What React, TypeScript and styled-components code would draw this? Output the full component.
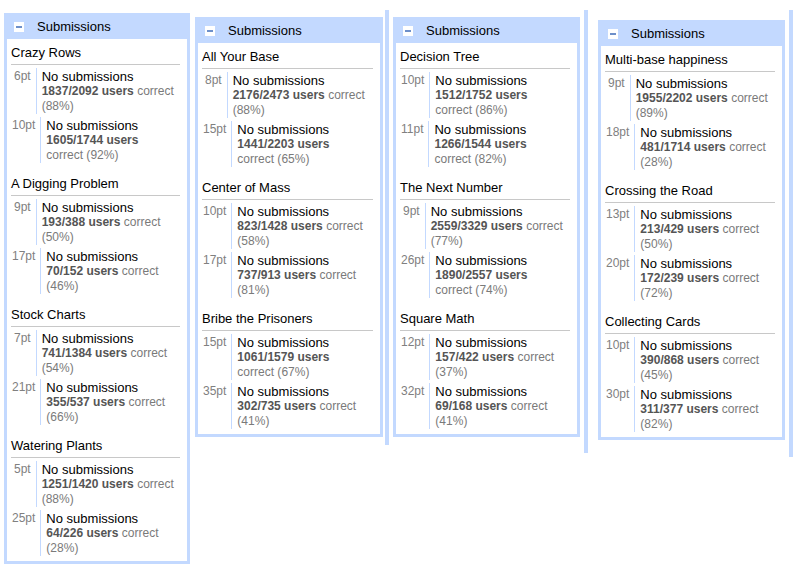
import React from "react";
import styled, { createGlobalStyle } from "styled-components";

type Row = { pts: string; ok: string; total: string; pct: string; split?: boolean };
type Section = { title: string; rows: Row[] };
type Col = { left: number; top: number; width: number; bar?: { gap: number; top: number; height: number }; sections: Section[] };

const columns: Col[] = [
  {
    left: 4,
    top: 13,
    width: 186,
    sections: [
      { title: "Crazy Rows", rows: [
        { pts: "6pt", ok: "1837", total: "2092", pct: "88%" },
        { pts: "10pt", ok: "1605", total: "1744", pct: "92%", split: true },
      ] },
      { title: "A Digging Problem", rows: [
        { pts: "9pt", ok: "193", total: "388", pct: "50%" },
        { pts: "17pt", ok: "70", total: "152", pct: "46%" },
      ] },
      { title: "Stock Charts", rows: [
        { pts: "7pt", ok: "741", total: "1384", pct: "54%" },
        { pts: "21pt", ok: "355", total: "537", pct: "66%" },
      ] },
      { title: "Watering Plants", rows: [
        { pts: "5pt", ok: "1251", total: "1420", pct: "88%" },
        { pts: "25pt", ok: "64", total: "226", pct: "28%" },
      ] },
    ],
  },
  {
    left: 5,
    top: 17,
    width: 188,
    bar: { gap: 2, top: 10, height: 435 },
    sections: [
      { title: "All Your Base", rows: [
        { pts: "8pt", ok: "2176", total: "2473", pct: "88%" },
        { pts: "15pt", ok: "1441", total: "2203", pct: "65%", split: true },
      ] },
      { title: "Center of Mass", rows: [
        { pts: "10pt", ok: "823", total: "1428", pct: "58%" },
        { pts: "17pt", ok: "737", total: "913", pct: "81%" },
      ] },
      { title: "Bribe the Prisoners", rows: [
        { pts: "15pt", ok: "1061", total: "1579", pct: "67%", split: true },
        { pts: "35pt", ok: "302", total: "735", pct: "41%" },
      ] },
    ],
  },
  {
    left: 4,
    top: 17,
    width: 187,
    bar: { gap: 4, top: 10, height: 443 },
    sections: [
      { title: "Decision Tree", rows: [
        { pts: "10pt", ok: "1512", total: "1752", pct: "86%", split: true },
        { pts: "11pt", ok: "1266", total: "1544", pct: "82%", split: true },
      ] },
      { title: "The Next Number", rows: [
        { pts: "9pt", ok: "2559", total: "3329", pct: "77%" },
        { pts: "26pt", ok: "1890", total: "2557", pct: "74%", split: true },
      ] },
      { title: "Square Math", rows: [
        { pts: "12pt", ok: "157", total: "422", pct: "37%" },
        { pts: "32pt", ok: "69", total: "168", pct: "41%" },
      ] },
    ],
  },
  {
    left: 10,
    top: 20,
    width: 187,
    bar: { gap: 4, top: 10, height: 447 },
    sections: [
      { title: "Multi-base happiness", rows: [
        { pts: "9pt", ok: "1955", total: "2202", pct: "89%" },
        { pts: "18pt", ok: "481", total: "1714", pct: "28%" },
      ] },
      { title: "Crossing the Road", rows: [
        { pts: "13pt", ok: "213", total: "429", pct: "50%" },
        { pts: "20pt", ok: "172", total: "239", pct: "72%" },
      ] },
      { title: "Collecting Cards", rows: [
        { pts: "10pt", ok: "390", total: "868", pct: "45%" },
        { pts: "30pt", ok: "311", total: "377", pct: "82%" },
      ] },
    ],
  },
];

const Global = createGlobalStyle`
  html, body { margin: 0; padding: 0; background: #ffffff; }
  body { font-family: "Liberation Sans", Arial, sans-serif; }
`;

const Page = styled.div`
  display: flex;
  align-items: flex-start;
  width: 801px;
  height: 582px;
  overflow: hidden;
  background: #ffffff;
`;

const Column = styled.div<{ $left: number }>`
  display: flex;
  align-items: flex-start;
  margin-left: ${(p) => p.$left}px;
`;

const Panel = styled.section<{ $top: number; $width: number }>`
  box-sizing: border-box;
  margin-top: ${(p) => p.$top}px;
  width: ${(p) => p.$width}px;
  background: #c3d9ff;
  padding: 0 3px 3px;
`;

const Header = styled.div`
  box-sizing: border-box;
  height: 26px;
  padding: 1px 0 0 7px;
  display: flex;
  align-items: center;
  font-size: 13px;
  color: #000;
`;

const Toggle = styled.span`
  box-sizing: border-box;
  width: 10px;
  height: 10px;
  margin-right: 13px;
  background: #ffffff;
  display: flex;
  align-items: center;
  justify-content: center;
  &::before {
    content: "";
    width: 6px;
    height: 2px;
    background: #6d8fc9;
  }
`;

const Body = styled.div`
  background: #ffffff;
  padding: 6px 7px 2px 4px;
  display: flex;
  flex-direction: column;
  gap: 10px;
`;

const Problem = styled.div``;

const Title = styled.div`
  font-size: 13px;
  line-height: 15px;
  color: #000;
  padding-bottom: 4px;
  border-bottom: 1px solid #c8c8c8;
  margin-bottom: 3px;
  white-space: nowrap;
`;

const Line = styled.div`
  display: flex;
  align-items: stretch;
  margin-bottom: 3px;
`;

const Points = styled.div<{ $wide: boolean }>`
  font-size: 12px;
  line-height: 15px;
  color: #808080;
  padding: 1px 5px 0 ${(p) => (p.$wide ? 1 : 3)}px;
  white-space: nowrap;
`;

const Result = styled.div`
  border-left: 1px solid #c3d9ff;
  padding: 1px 0 0 5px;
  height: 45px;
  line-height: 15px;
  white-space: nowrap;
`;

const Status = styled.div`
  font-size: 13px;
  color: #000;
`;

const Stat = styled.div`
  font-size: 12px;
  color: #7a7a7a;
`;

const Count = styled.b`
  color: #555555;
`;

const Bar = styled.div<{ $gap: number; $top: number; $height: number }>`
  width: 4px;
  margin-left: ${(p) => p.$gap}px;
  margin-top: ${(p) => p.$top}px;
  height: ${(p) => p.$height}px;
  background: #c3d9ff;
`;

function ResultRow({ row }: { row: Row }) {
  const count = <Count>{row.ok}/{row.total} users</Count>;
  return (
    <Line>
      <Points $wide={row.pts.length > 3}>{row.pts}</Points>
      <Result>
        <Status>No submissions</Status>
        {row.split ? (
          <>
            <Stat>{count}</Stat>
            <Stat>correct ({row.pct})</Stat>
          </>
        ) : (
          <>
            <Stat>{count} correct</Stat>
            <Stat>({row.pct})</Stat>
          </>
        )}
      </Result>
    </Line>
  );
}

export default function App() {
  return (
    <>
      <Global />
      <Page>
        {columns.map((col, i) => (
          <Column key={i} $left={col.left}>
            <Panel $top={col.top} $width={col.width}>
              <Header>
                <Toggle />
                Submissions
              </Header>
              <Body>
                {col.sections.map((s) => (
                  <Problem key={s.title}>
                    <Title>{s.title}</Title>
                    {s.rows.map((r) => (
                      <ResultRow key={r.pts + r.ok} row={r} />
                    ))}
                  </Problem>
                ))}
              </Body>
            </Panel>
            {col.bar && <Bar $gap={col.bar.gap} $top={col.bar.top} $height={col.bar.height} />}
          </Column>
        ))}
      </Page>
    </>
  );
}
